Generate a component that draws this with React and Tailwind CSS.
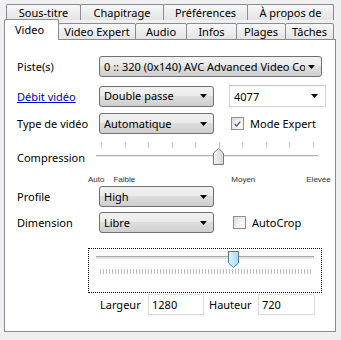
import React from "react";

const topTabs = [
  { label: "Sous-titre", w: "w-[75px]" },
  { label: "Chapitrage", w: "w-[84px]" },
  { label: "Préférences", w: "w-[85px]" },
  { label: "À propos de", w: "w-[87px]" },
];

const bottomTabs = [
  { label: "Video Expert", w: "w-[78px]" },
  { label: "Audio", w: "w-[52px]" },
  { label: "Infos", w: "w-[51px]" },
  { label: "Plages", w: "w-[50px]" },
  { label: "Tâches", w: "w-[49px]" },
];

function Arrow() {
  return (
    <svg width="7" height="4" viewBox="0 0 7 4" className="shrink-0 ml-[3px]">
      <path d="M0 0h7L3.5 4z" fill="#000" />
    </svg>
  );
}

function Select({ value, w }) {
  return (
    <div
      className={`${w} h-[21px] flex items-center justify-between pl-[4px] pr-[6px] rounded-[3px] border border-[#707070] bg-[linear-gradient(#f2f2f2_0%,#ebebeb_45%,#dddddd_50%,#cfcfcf_100%)]`}
    >
      <span className="min-w-0 overflow-hidden whitespace-nowrap leading-[16px]">{value}</span>
      <Arrow />
    </div>
  );
}

function Check({ checked }) {
  return (
    <div className="w-[13px] h-[13px] border border-[#8e8f8f] bg-[linear-gradient(135deg,#dcdcdc,#fdfdfd)] p-[2px] shrink-0">
      <div className="w-full h-full bg-[linear-gradient(135deg,#e6e6e6,#ffffff)] flex items-center justify-center">
        {checked && (
          <svg width="9" height="8" viewBox="0 0 9 8">
            <path d="M1 4l2.5 2.5L8 1" stroke="#4a5f97" strokeWidth="1.8" fill="none" />
          </svg>
        )}
      </div>
    </div>
  );
}

function Label({ children }) {
  return <div className="w-[82px] shrink-0 whitespace-nowrap">{children}</div>;
}

export default function App() {
  return (
    <div className="w-[341px] h-[340px] bg-[#f0f0f0] pt-[4px] pl-[4px] text-[11px] text-black font-['Noto_Sans',sans-serif] leading-none">
      {/* top row of tabs */}
      <div className="flex h-[16px] ml-[2px]">
        {topTabs.map((t, i) => (
          <div
            key={t.label}
            className={`${t.w} ${i > 0 ? "-ml-px" : ""} flex items-center justify-center border border-b-0 border-[#898c95] rounded-t-[2px] bg-[linear-gradient(#f7f7f7,#e4e4e4)]`}
          >
            {t.label}
          </div>
        ))}
      </div>

      {/* second row of tabs */}
      <div className="flex items-end h-[20px] relative z-10 -mb-px">
        <div className="w-[55px] h-[21px] flex items-center pl-[10px] pb-[2px] bg-white border border-b-0 border-[#898c95] rounded-t-[2px]">
          Video
        </div>
        {bottomTabs.map((t) => (
          <div
            key={t.label}
            className={`${t.w} -ml-px h-[17px] flex items-center justify-center border border-[#898c95] rounded-t-[2px] bg-[linear-gradient(#f7f7f7,#e4e4e4)]`}
          >
            {t.label}
          </div>
        ))}
      </div>

      {/* panel */}
      <div className="w-[332px] h-[293px] bg-white border border-[#898c95] flex flex-col pl-[12px]">
        <div className="flex items-center mt-[16px]">
          <Label>Piste(s)</Label>
          <Select value="0 :: 320 (0x140) AVC Advanced Video Codec" w="w-[223px]" />
        </div>

        <div className="flex items-center mt-[8px]">
          <Label>
            <span className="text-[#0000cc] underline">Débit vidéo</span>
          </Label>
          <Select value="Double passe" w="w-[115px]" />
          <div className="ml-[15px] w-[97px] h-[22px] flex items-center justify-between pl-[4px] pr-[7px] border border-[#d6d6d6] border-t-[#c4c4c4] bg-white">
            <span>4077</span>
            <Arrow />
          </div>
        </div>

        <div className="flex items-center mt-[6px]">
          <Label>Type de vidéo</Label>
          <Select value="Automatique" w="w-[115px]" />
          <div className="ml-[17px] flex items-center gap-[6px]">
            <Check checked />
            <span>Mode Expert</span>
          </div>
        </div>

        {/* compression slider */}
        <div className="flex items-center mt-[6px] h-[30px]">
          <div className="w-[79px] shrink-0 pt-[4px]">Compression</div>
          <div className="relative w-[222px] h-[30px]">
            <div className="absolute left-[5px] right-[4px] top-[2px] h-[6px] flex justify-between">
              {Array.from({ length: 10 }).map((_, i) => (
                <div key={i} className="w-px h-full bg-[#c8c8c8]" />
              ))}
            </div>
            <div className="absolute left-0 right-0 top-[15px] h-[2px] border-t border-[#b0b0b0] bg-[#e7eaea]" />
            <svg className="absolute left-[117px] top-[8px]" width="11" height="17" viewBox="0 0 11 17">
              <defs>
                <linearGradient id="tg" x1="0" y1="0" x2="1" y2="0">
                  <stop offset="0" stopColor="#f4f4f4" />
                  <stop offset="1" stopColor="#d4d4d4" />
                </linearGradient>
              </defs>
              <path d="M0.5 16.5V5L5.5 0.5L10.5 5V16.5Z" fill="url(#tg)" stroke="#7a7a7a" />
            </svg>
          </div>
        </div>
        <div className="flex items-center h-[13px] text-[8px] text-[#333] font-['Liberation_Sans',sans-serif] mt-[3px]">
          <span className="ml-[71px]">Auto</span>
          <span className="ml-[9px]">Faible</span>
          <span className="ml-[96px]">Moyen</span>
          <span className="ml-[51px]">Elevée</span>
        </div>

        <div className="flex items-center">
          <Label>Profile</Label>
          <Select value="High" w="w-[115px]" />
        </div>

        <div className="flex items-center mt-[5px]">
          <Label>Dimension</Label>
          <Select value="Libre" w="w-[115px]" />
          <div className="ml-[19px] flex items-center gap-[6px]">
            <Check />
            <span>AutoCrop</span>
          </div>
        </div>

        {/* dimension slider */}
        <div className="relative ml-[71px] mt-[15px] w-[234px] h-[45px] border border-dotted border-black">
          <div className="absolute left-[7px] w-[218px] top-[7px] h-[3px] border-t border-[#a8a8a8] bg-[#e4e4e4]" />
          <svg className="absolute left-[139px] top-[2px]" width="11" height="17" viewBox="0 0 11 17">
            <defs>
              <linearGradient id="bg" x1="0" y1="0" x2="1" y2="0">
                <stop offset="0" stopColor="#e8f6fd" />
                <stop offset="1" stopColor="#a7d9f1" />
              </linearGradient>
            </defs>
            <path d="M0.5 0.5H10.5V12L5.5 16.5L0.5 12Z" fill="url(#bg)" stroke="#3c7fb1" />
          </svg>
          <div className="absolute left-[11px] w-[211px] top-[20px] h-[5px] bg-[repeating-linear-gradient(90deg,#c0c0c0_0px,#c0c0c0_1px,transparent_1px,transparent_3px)]" />
        </div>

        <div className="flex items-center mt-[1px] ml-[83px]">
          <span className="w-[48px]">Largeur</span>
          <div className="w-[56px] h-[21px] flex items-center pl-[3px] border border-[#dcdcdc]">1280</div>
          <span className="ml-[5px] w-[49px]">Hauteur</span>
          <div className="w-[57px] h-[21px] flex items-center pl-[3px] border border-[#dcdcdc]">720</div>
        </div>
      </div>
    </div>
  );
}
